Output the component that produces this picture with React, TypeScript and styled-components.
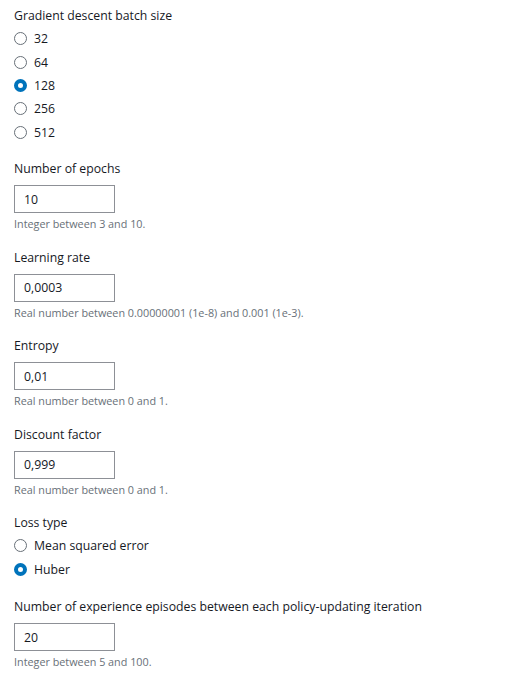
import React from "react";
import styled, { createGlobalStyle } from "styled-components";

const Global = createGlobalStyle`
  html, body { margin: 0; padding: 0; background: #ffffff; }
  body { font-family: "Open Sans", "Noto Sans", sans-serif; color: #16191f; }
`;

const Page = styled.div`
  padding: 6px 14px 0 14px;
  display: flex;
  flex-direction: column;
`;

const Group = styled.div<{ $gap?: number }>`
  display: flex;
  flex-direction: column;
  margin-bottom: ${(p) => p.$gap ?? 0}px;
`;

const Label = styled.div`
  font-size: 12.25px;
  line-height: 20px;
  height: 20px;
  color: #16191f;
`;

const RadioList = styled.div`
  display: flex;
  flex-direction: column;
  margin-top: 1px;
`;

const RadioRow = styled.div`
  display: flex;
  align-items: center;
  height: 23.4px;
  gap: 7px;
`;

const Circle = styled.span<{ $checked?: boolean }>`
  width: 13px;
  height: 13px;
  box-sizing: border-box;
  border-radius: 50%;
  border: ${(p) => (p.$checked ? "4px solid #0073bb" : "1px solid #687078")};
  background: #fff;
  flex: none;
`;

const RadioText = styled.span`
  font-size: 12.25px;
  color: #16191f;
`;

const Input = styled.div`
  margin-top: 6px;
  width: 101px;
  height: 28px;
  box-sizing: border-box;
  border: 1px solid #8d9096;
  padding: 0 9px;
  display: flex;
  align-items: center;
  font-size: 12.25px;
  color: #16191f;
`;

const Hint = styled.div`
  font-size: 10.8px;
  line-height: 16px;
  margin-top: 3px;
  color: #687078;
`;

type Field = { label: string; value: string; hint: string };

const fields: Field[] = [
  { label: "Number of epochs", value: "10", hint: "Integer between 3 and 10." },
  { label: "Learning rate", value: "0,0003", hint: "Real number between 0.00000001 (1e-8) and 0.001 (1e-3)." },
  { label: "Entropy", value: "0,01", hint: "Real number between 0 and 1." },
  { label: "Discount factor", value: "0,999", hint: "Real number between 0 and 1." },
];

const RadioGroup = ({ label, options, checked, gap }: { label: string; options: string[]; checked: string; gap: number }) => (
  <Group $gap={gap}>
    <Label>{label}</Label>
    <RadioList>
      {options.map((o) => (
        <RadioRow key={o}>
          <Circle $checked={o === checked} />
          <RadioText>{o}</RadioText>
        </RadioRow>
      ))}
    </RadioList>
  </Group>
);

const FieldGroup = ({ f, gap }: { f: Field; gap: number }) => (
  <Group $gap={gap}>
    <Label>{f.label}</Label>
    <Input>{f.value}</Input>
    <Hint>{f.hint}</Hint>
  </Group>
);

export default function App() {
  return (
    <>
      <Global />
      <Page>
        <RadioGroup label="Gradient descent batch size" options={["32", "64", "128", "256", "512"]} checked="128" gap={15.5} />
        {fields.map((f) => (
          <FieldGroup key={f.label} f={f} gap={15.4} />
        ))}
        <RadioGroup label="Loss type" options={["Mean squared error", "Huber"]} checked="Huber" gap={16.5} />
        <FieldGroup f={{ label: "Number of experience episodes between each policy-updating iteration", value: "20", hint: "Integer between 5 and 100." }} gap={0} />
      </Page>
    </>
  );
}
